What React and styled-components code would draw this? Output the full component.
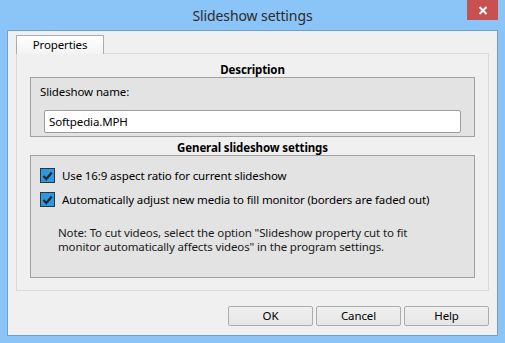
import React from "react";
import styled, { createGlobalStyle } from "styled-components";

const Global = createGlobalStyle`
   html, body {
      margin: 0;
      padding: 0;
      background: #8bc4f7;
   }
   * {
      box-sizing: border-box;
   }
`;

const Window = styled.div`
   width: 505px;
   height: 343px;
   background: #8bc4f7;
   display: flex;
   flex-direction: column;
   padding: 0 7px 7px 7px;
   font-family: "Noto Sans", "Open Sans", sans-serif;
   font-size: 11.5px;
   letter-spacing: -0.13px;
   color: #000;
`;

const TitleBar = styled.div`
   position: relative;
   height: 30px;
   display: flex;
   align-items: center;
   justify-content: center;
`;

const Title = styled.div`
   font-size: 14px;
   letter-spacing: -0.1px;
   color: #2b2b2b;
   margin-top: 1px;
`;

const CloseButton = styled.div`
   position: absolute;
   top: 0;
   right: 0;
   width: 31px;
   height: 20px;
   background: #c75050;
   display: flex;
   align-items: center;
   justify-content: center;
`;

const Client = styled.div`
   flex: 1;
   background: #f0f0f0;
   border: 1px solid #6f9fcf;
   display: flex;
   flex-direction: column;
   padding: 4px 8px 0 8px;
`;

const TabStrip = styled.div`
   display: flex;
   position: relative;
   z-index: 1;
   margin-bottom: -1px;
`;

const Tab = styled.div`
   width: 88px;
   height: 19px;
   border: 1px solid #acacac;
   border-bottom: none;
   background: linear-gradient(#ffffff, #f3f3f3);
   display: flex;
   align-items: center;
   justify-content: center;
   padding-bottom: 1px;
`;

const Panel = styled.div`
   width: 473px;
   height: 238px;
   border: 1px solid #d9d9d9;
   background: #f0f0f0;
   padding: 8px 13px 0 13px;
   display: flex;
   flex-direction: column;
`;

const Heading = styled.div`
   font-weight: bold;
   text-align: center;
   line-height: 15px;
   height: 15px;
   margin-top: ${({ $top }) => $top || 0}px;
`;

const Group = styled.div`
   height: ${({ $h }) => $h}px;
   border: 1px solid #a0a0a0;
   background: #e3e3e3;
   padding: ${({ $pad }) => $pad};
   display: flex;
   flex-direction: column;
`;

const Label = styled.div`
   line-height: 16px;
   margin-bottom: 10px;
`;

const TextBox = styled.input`
   height: 23px;
   margin: 0 4px;
   border: 1px solid #9a9ca3;
   border-radius: 2px;
   background: #fff;
   font: inherit;
   letter-spacing: inherit;
   color: #000;
   padding: 0 4px;
   outline: none;
`;

const CheckRow = styled.label`
   display: flex;
   align-items: center;
   gap: 7px;
   height: 15px;
   margin-bottom: ${({ $gap }) => $gap || 0}px;
`;

const Box = styled.span`
   width: 15px;
   height: 15px;
   border: 1px solid #2c3440;
   background: #2f97dc;
   display: flex;
   align-items: center;
   justify-content: center;
`;

const Note = styled.div`
   margin: 19px 0 0 18px;
   color: #1a1a1a;
   line-height: 14px;
`;

const Footer = styled.div`
   display: flex;
   justify-content: flex-end;
   gap: 3px;
   margin-top: 15px;
`;

const Button = styled.button`
   width: 85px;
   height: 20px;
   border: 1px solid #acacac;
   border-radius: 2px;
   background: linear-gradient(#f0f0f0, #e5e5e5);
   font: inherit;
   letter-spacing: inherit;
   color: #000;
   padding: 0 0 1px 0;
`;

const Check = () => (
   <Box>
      <svg width="11" height="10" viewBox="0 0 11 10">
         <path d="M1.5 5 L4.3 8 L9.8 1.5" fill="none" stroke="#1c2733" strokeWidth="2.2" />
      </svg>
   </Box>
);

export default function App() {
   return (
      <>
         <Global />
         <Window>
            <TitleBar>
               <Title>Slideshow settings</Title>
               <CloseButton>
                  <svg width="10" height="9" viewBox="0 0 10 9">
                     <path d="M1.5 1 L8.5 8 M8.5 1 L1.5 8" stroke="#fff" strokeWidth="2" />
                  </svg>
               </CloseButton>
            </TitleBar>
            <Client>
               <TabStrip>
                  <Tab>Properties</Tab>
               </TabStrip>
               <Panel>
                  <Heading>Description</Heading>
                  <Group $h={60} $pad="6px 9px 0 9px">
                     <Label>Slideshow name:</Label>
                     <TextBox defaultValue="Softpedia.MPH" />
                  </Group>
                  <Heading $top={3}>General slideshow settings</Heading>
                  <Group $h={123} $pad="12px 9px 0 9px">
                     <CheckRow $gap={9}>
                        <Check />
                        Use 16:9 aspect ratio for current slideshow
                     </CheckRow>
                     <CheckRow>
                        <Check />
                        Automatically adjust new media to fill monitor (borders are faded out)
                     </CheckRow>
                     <Note>
                        Note: To cut videos, select the option "Slideshow property cut to fit
                        <br />
                        monitor automatically affects videos" in the program settings.
                     </Note>
                  </Group>
               </Panel>
               <Footer>
                  <Button>OK</Button>
                  <Button>Cancel</Button>
                  <Button>Help</Button>
               </Footer>
            </Client>
         </Window>
      </>
   );
}
